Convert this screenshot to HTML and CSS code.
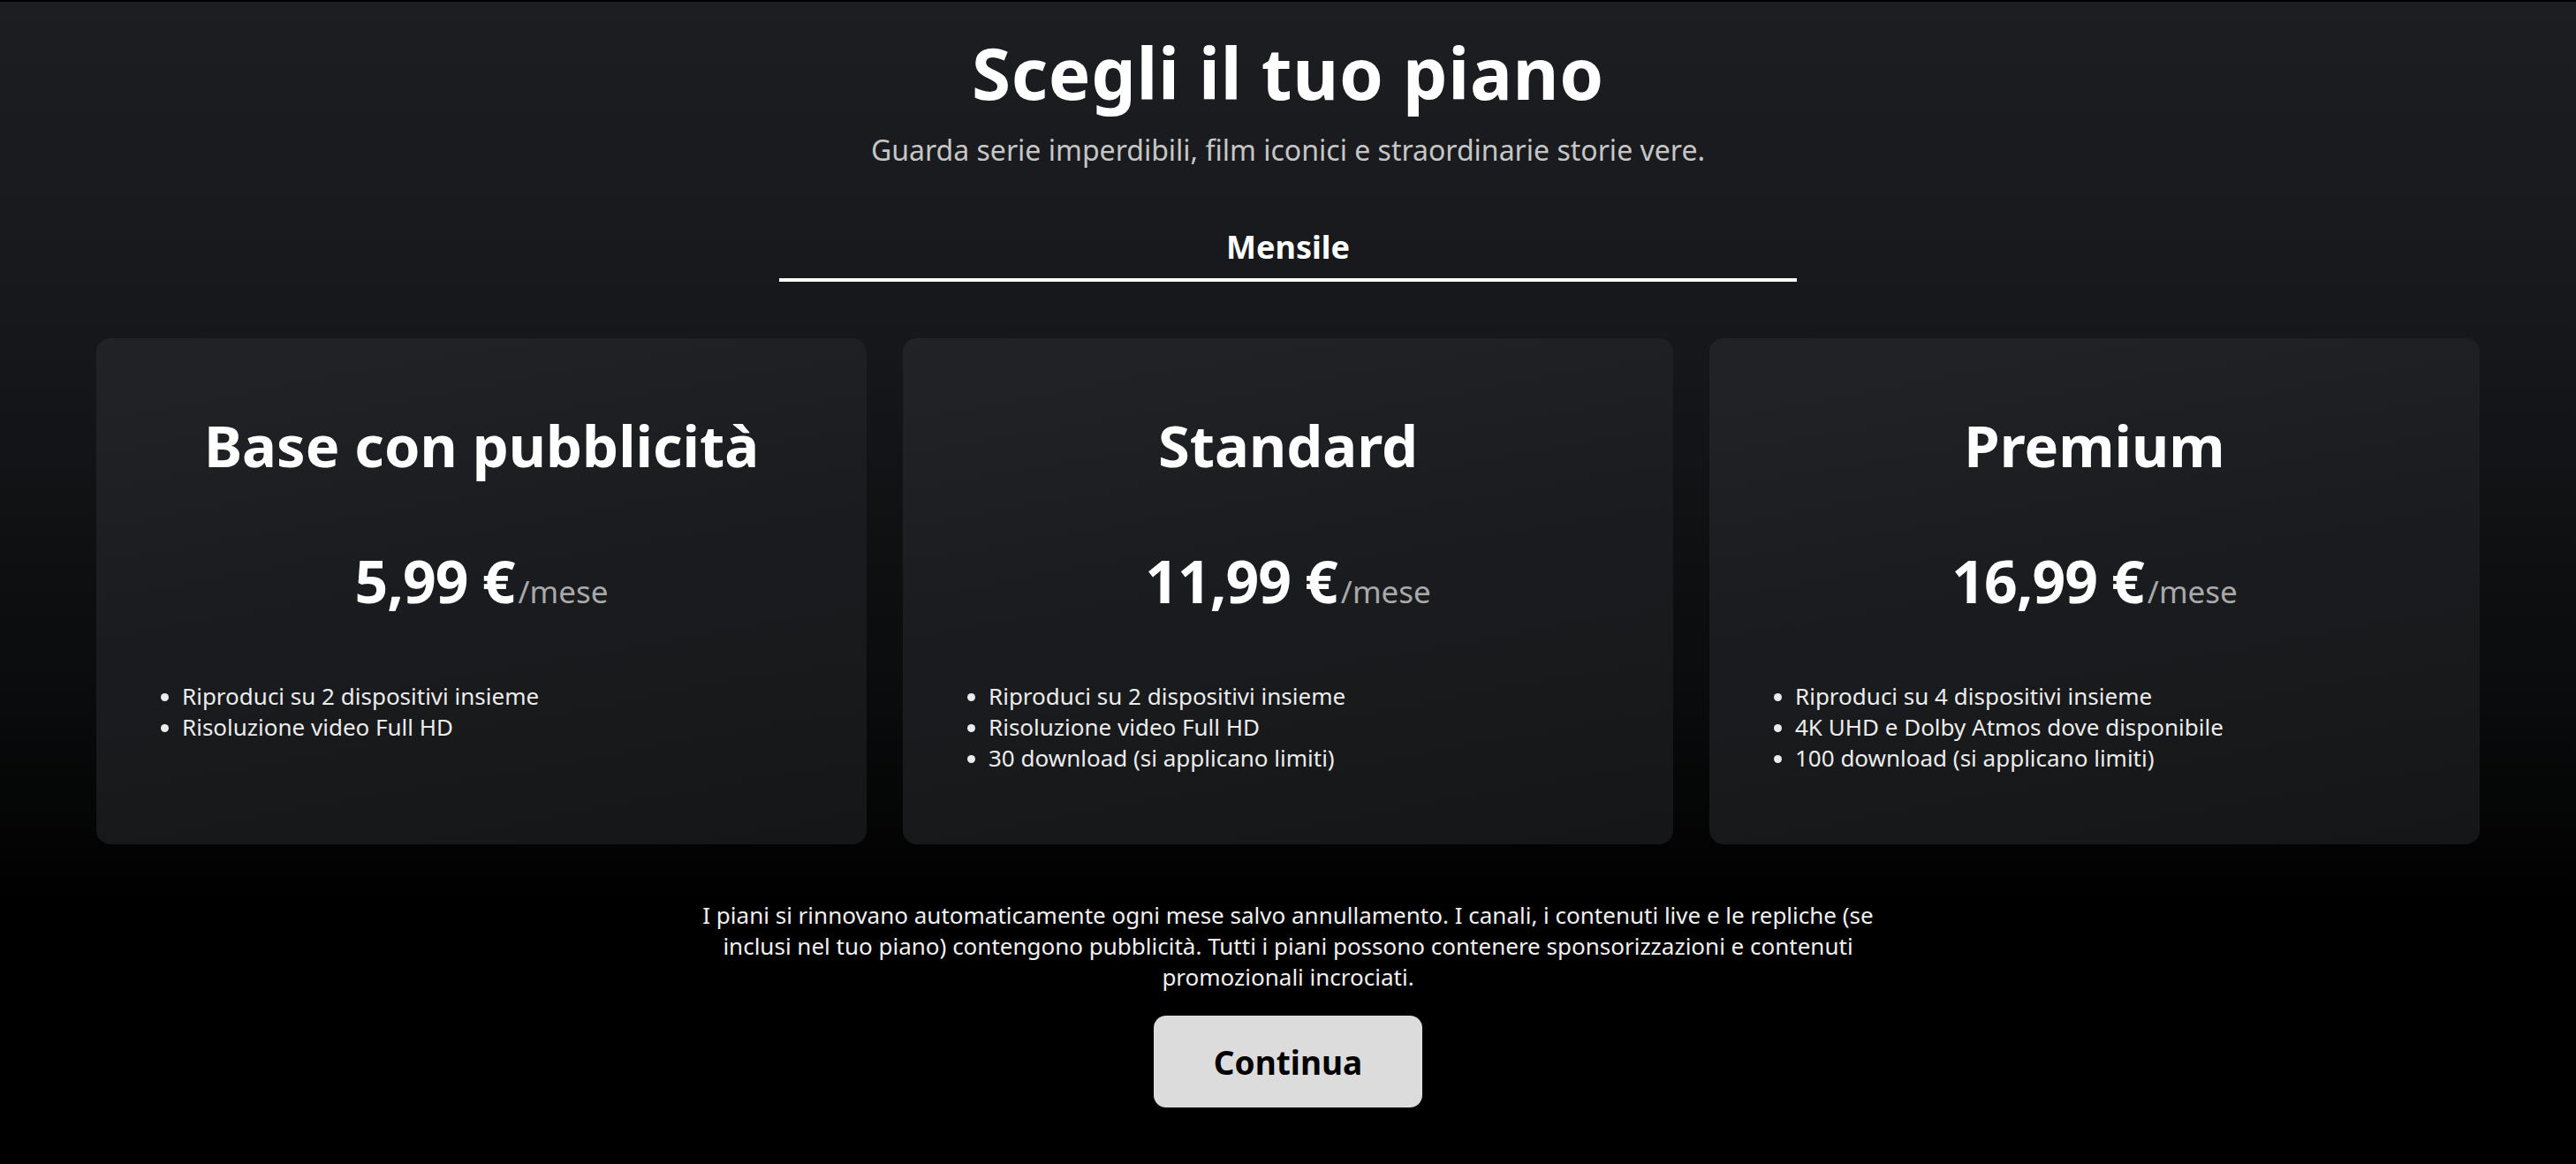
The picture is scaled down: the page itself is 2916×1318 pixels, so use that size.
FILE: index.html
```html
<!DOCTYPE html>
<html lang="it">
<head>
<meta charset="utf-8">
<title>Scegli il tuo piano</title>
<link rel="stylesheet" href="styles.css">
</head>
<body>
<main class="page">
  <h1 class="title">Scegli il tuo piano</h1>
  <p class="subtitle">Guarda serie imperdibili, film iconici e straordinarie storie vere.</p>
  <div class="tabs">
    <div class="tab tab-active">Mensile</div>
  </div>
  <section class="plans">
    <article class="plan">
      <h2 class="plan-name">Base con pubblicità</h2>
      <div class="plan-price"><span class="amount">5,99 €</span><span class="period">/mese</span></div>
      <ul class="features">
        <li>Riproduci su 2 dispositivi insieme</li>
        <li>Risoluzione video Full HD</li>
      </ul>
    </article>
    <article class="plan">
      <h2 class="plan-name">Standard</h2>
      <div class="plan-price"><span class="amount">11,99 €</span><span class="period">/mese</span></div>
      <ul class="features">
        <li>Riproduci su 2 dispositivi insieme</li>
        <li>Risoluzione video Full HD</li>
        <li>30 download (si applicano limiti)</li>
      </ul>
    </article>
    <article class="plan">
      <h2 class="plan-name">Premium</h2>
      <div class="plan-price"><span class="amount">16,99 €</span><span class="period">/mese</span></div>
      <ul class="features">
        <li>Riproduci su 4 dispositivi insieme</li>
        <li>4K UHD e Dolby Atmos dove disponibile</li>
        <li>100 download (si applicano limiti)</li>
      </ul>
    </article>
  </section>
  <p class="disclaimer">I piani si rinnovano automaticamente ogni mese salvo annullamento. I canali, i contenuti live e le repliche (se inclusi nel tuo piano) contengono pubblicità. Tutti i piani possono contenere sponsorizzazioni e contenuti promozionali incrociati.</p>
  <button class="continue" type="button">Continua</button>
</main>
</body>
</html>
```
FILE: styles.css
```css
html, body {
  margin: 0;
  padding: 0;
}
body {
  min-height: 1318px;
  background: linear-gradient(180deg, #1d1e21 0%, #16171a 30%, #0a0b0c 60%, #000 78%, #000 100%);
  border-top: 2px solid #000;
  box-sizing: border-box;
  font-family: "Noto Sans", "Open Sans", sans-serif;
  color: #fff;
}
.page {
  display: flex;
  flex-direction: column;
  align-items: center;
  padding: 32px 109px 0;
}
.title {
  margin: 0;
  font-size: 80px;
  line-height: 96px;
  font-weight: 700;
  letter-spacing: 0.7px;
}
.subtitle {
  margin: 19px 0 0;
  font-size: 32px;
  line-height: 42px;
  color: #c6c6c6;
}
.tabs {
  margin-top: 67px;
  width: 1152px;
  display: flex;
  justify-content: center;
}
.tab {
  flex: 1;
  text-align: center;
  font-size: 36px;
  line-height: 44px;
  font-weight: 700;
  padding-bottom: 13px;
  border-bottom: 4px solid #fff;
}
.plans {
  margin-top: 64px;
  width: 100%;
  display: grid;
  grid-template-columns: repeat(3, 1fr);
  gap: 41px;
}
.plan {
  border-radius: 16px;
  background: linear-gradient(170deg, #222327 0%, #1b1c1f 45%, #151617 100%);
  padding: 83px 60px 80px;
}
.plan-name {
  margin: 0;
  text-align: center;
  font-size: 65px;
  line-height: 76px;
  font-weight: 700;
}
.plan-price {
  margin-top: 75px;
  text-align: center;
  line-height: 80px;
}
.amount {
  font-size: 66px;
  font-weight: 700;
  letter-spacing: -1px;
}
.period {
  font-size: 35px;
  color: #a9a9a9;
  margin-left: 4px;
}
.features {
  margin: 54px 0 0;
  padding-left: 37px;
  font-size: 26px;
  line-height: 35px;
  color: #ececec;
}
.features li::marker {
  font-size: 24px;
}
.disclaimer {
  margin: 63px 0 0;
  max-width: 1340px;
  text-align: center;
  font-size: 26px;
  line-height: 35px;
  color: #f0f0f0;
}
.continue {
  margin-top: 26px;
  width: 304px;
  height: 104px;
  border: none;
  border-radius: 14px;
  background: #dcdcdc;
  color: #000;
  font-family: "Noto Sans", "Open Sans", sans-serif;
  font-size: 37px;
  font-weight: 700;
  cursor: pointer;
}
```
